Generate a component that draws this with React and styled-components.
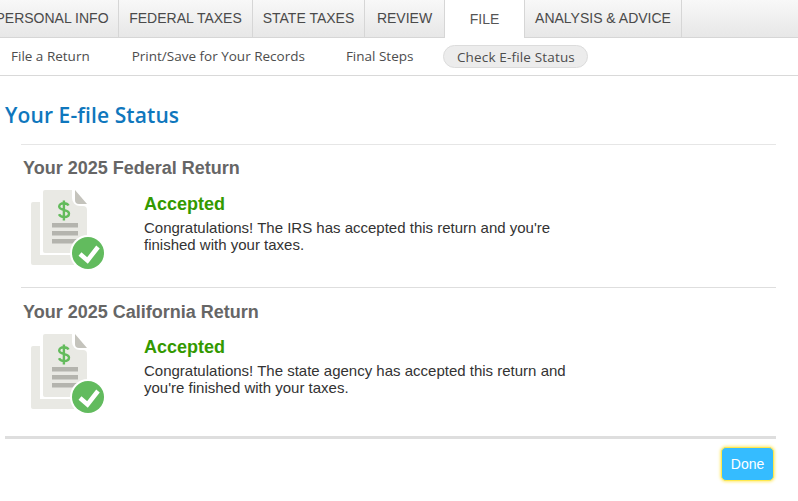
import React from 'react'
import styled, { createGlobalStyle } from 'styled-components'

const GlobalStyle = createGlobalStyle`
  html, body { margin: 0; padding: 0; background: #fff; }
  body { font-family: "Liberation Sans", Arial, sans-serif; overflow: hidden; }
`
const Page = styled.div`
  width: 798px;
  height: 501px;
  overflow: hidden;
`
const TabBar = styled.div`
  display: flex;
  height: 37px;
  margin-left: -14px;
  border-bottom: 1px solid #d6d6d6;
  background: linear-gradient(#f8f8f8, #e7e7e7);
`
const Tab = styled.div`
  display: flex;
  align-items: center;
  justify-content: center;
  width: ${p => p.$w}px;
  box-sizing: border-box;
  padding-bottom: 2px;
  font-size: 14px;
  color: #4a4a4a;
  border-right: 1px solid #d6d6d6;
  ${p => p.$active && `
    background: #fff;
    height: 38px;
    padding-bottom: 0;
    color: #555;
  `}
`
const SubNav = styled.div`
  display: flex;
  align-items: center;
  height: 37px;
  border-bottom: 1px solid #d9d9d9;
  font-family: "Open Sans", sans-serif;
  font-size: 13.5px;
  color: #4d4d4d;
`
const SubItem = styled.div`
  padding: 0 14px;
  margin-left: ${p => p.$ml || 0}px;
  height: 23px;
  line-height: 22px;
  box-sizing: border-box;
  ${p => p.$active && `
    background: #ececec;
    border: 1px solid #dcdcdc;
    border-radius: 12px;
    padding: 0 12px 0 13px;
    letter-spacing: 0.16px;
  `}
`
const Heading = styled.h1`
  margin: 0;
  padding: 26px 0 0 5px;
  height: 42px;
  font-family: "Open Sans", sans-serif;
  font-size: 21px;
  line-height: 26px;
  font-weight: 600;
  letter-spacing: 0.1px;
  color: #0f77bd;
`
const Section = styled.section`
  box-sizing: border-box;
  margin: 0 22px 0 21px;
  height: ${p => (p.$second ? 144 : 143)}px;
  border-top: 1px solid ${p => (p.$second ? '#dedede' : '#e6e6e6')};
`
const SectionTitle = styled.h2`
  margin: 0;
  padding: ${p => (p.$second ? 14 : 13)}px 0 0 2px;
  font-size: 18px;
  line-height: 20px;
  font-weight: 700;
  color: #666;
`
const Row = styled.div`
  display: flex;
  margin-top: 12px;
`
const IconBox = styled.div`
  width: 123px;
  padding-left: 9px;
  flex: none;
  box-sizing: border-box;
`
const Status = styled.div`
  font-size: 18px;
  line-height: 20px;
  margin-top: ${p => (p.$second ? 3 : 4)}px;
  font-weight: 700;
  color: #339900;
`
const Body = styled.p`
  margin: 5px 0 0;
  width: 430px;
  font-size: 15px;
  line-height: 17px;
  color: #333;
`
const Footer = styled.div`
  display: flex;
  justify-content: flex-end;
  margin: 5px 22px 0 5px;
  padding-top: 8px;
  border-top: 3px solid #dedede;
`
const DoneButton = styled.button`
  width: 53px;
  height: 34px;
  margin-right: 2px;
  border: 1px solid #ffe94d;
  border-radius: 5px;
  box-shadow: 0 0 3px 1px #ffeb7a;
  background: #35bcff;
  color: #fff;
  font-family: "Liberation Sans", Arial, sans-serif;
  font-size: 14px;
`

const ReturnIcon = () => (
  <svg width="76" height="80" viewBox="0 0 76 80">
    <path d="M1 14a2 2 0 0 1 2-2h7v53h34v10H3a2 2 0 0 1-2-2z" fill="#e9e9e4" />
    <path d="M13 2a2 2 0 0 1 2-2h27v8a8 8 0 0 0 8 8h3a4 4 0 0 1 4 4v41a2 2 0 0 1-2 2H15a2 2 0 0 1-2-2z" fill="#e9e9e4" />
    <path d="M45 0l12 14H49a4 4 0 0 1-4-4z" fill="#c4c3bc" />
    <rect x="22" y="33" width="26" height="4.500" fill="#b4b4ae" />
    <rect x="22" y="41" width="26" height="4.500" fill="#b4b4ae" />
    <rect x="22" y="49" width="26" height="4.500" fill="#b4b4ae" />
    <path d="M38.500 15.500c-.7-1.500-2.400-2.300-4.600-2.300-2.900 0-4.700 1.400-4.700 3.400 0 4.600 9.800 2.300 9.800 6.900 0 2.100-2 3.500-4.900 3.500-2.400 0-4.300-1-5.100-2.700M33.900 10.500v20" fill="none" stroke="#63bb5c" strokeWidth="2.400" />
    <circle cx="58" cy="63" r="18" fill="#fff" />
    <circle cx="58" cy="63" r="16" fill="#62bb5e" />
    <path d="M50 64l7.500 6.500L68 57" fill="none" stroke="#fff" strokeWidth="4.500" />
  </svg>
)

const ReturnStatus = ({ title, text, second }) => (
  <Section $second={second}>
    <SectionTitle $second={second}>{title}</SectionTitle>
    <Row>
      <IconBox><ReturnIcon /></IconBox>
      <div>
        <Status $second={second}>Accepted</Status>
        <Body>{text}</Body>
      </div>
    </Row>
  </Section>
)

export default function App() {
  return (
    <Page>
      <GlobalStyle />
      <TabBar>
        <Tab $w={133}>PERSONAL INFO</Tab>
        <Tab $w={134}>FEDERAL TAXES</Tab>
        <Tab $w={112}>STATE TAXES</Tab>
        <Tab $w={80}>REVIEW</Tab>
        <Tab $w={80} $active>FILE</Tab>
        <Tab $w={157}>ANALYSIS &amp; ADVICE</Tab>
      </TabBar>
      <SubNav>
        <SubItem $ml={-3}>File a Return</SubItem>
        <SubItem $ml={14}>Print/Save for Your Records</SubItem>
        <SubItem $ml={13}>Final Steps</SubItem>
        <SubItem $ml={15.5} $active>Check E-file Status</SubItem>
      </SubNav>
      <Heading>Your E-file Status</Heading>
      <ReturnStatus
        title="Your 2025 Federal Return"
        text="Congratulations! The IRS has accepted this return and you're finished with your taxes."
      />
      <ReturnStatus
        second
        title="Your 2025 California Return"
        text="Congratulations! The state agency has accepted this return and you're finished with your taxes."
      />
      <Footer>
        <DoneButton>Done</DoneButton>
      </Footer>
    </Page>
  )
}
